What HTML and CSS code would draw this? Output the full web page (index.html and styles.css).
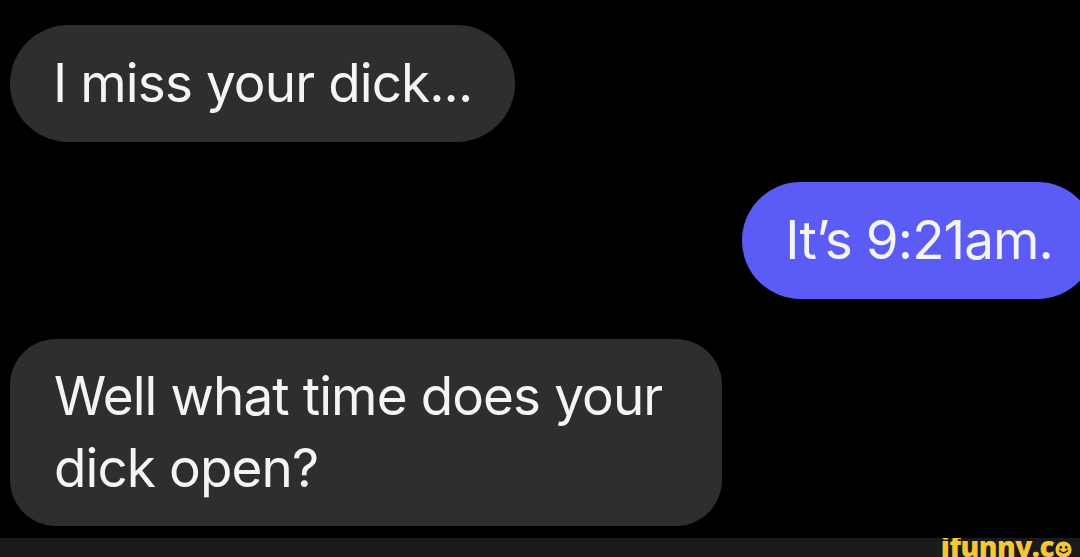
FILE: index.html
```html
<!DOCTYPE html>
<html lang="en">
<head>
    <meta charset="UTF-8">
    <title>Messages</title>
    <link rel="stylesheet" href="styles.css">
</head>
<body>
    <div class="thread">
        <div class="bubble incoming">I miss your dick...</div>
        <div class="bubble outgoing">It’s 9:21am.</div>
        <div class="bubble incoming multi">Well what time does your dick open?</div>
    </div>

    <div class="watermark-bar">
        <span class="logo">ifunny.c<svg class="smiley" viewBox="0 0 20 20" width="17" height="17">
            <circle cx="10" cy="10" r="9.5" fill="#f7c733"/>
            <circle cx="6.8" cy="7.6" r="1.6" fill="#1b1b1b"/>
            <circle cx="13.2" cy="7.6" r="1.6" fill="#1b1b1b"/>
            <path d="M5.2 11.2 Q10 16.4 14.8 11.2" fill="none" stroke="#1b1b1b" stroke-width="1.9" stroke-linecap="round"/>
        </svg></span>
    </div>
</body>
</html>
```

FILE: styles.css
```css
html, body {
    margin: 0;
    background: #000;
    height: 100%;
    overflow: hidden;
}
body {
    font-family: Inter, "Noto Sans", sans-serif;
    color: #f4f4f4;
}
.thread {
    display: flex;
    flex-direction: column;
    gap: 40px;
    padding: 25px 0 0 10px;
}
.bubble {
    font-size: 53px;
    line-height: 61px;
    padding: 28px 43px;
    border-radius: 59px;
    letter-spacing: -0.9px;
    white-space: nowrap;
}
.incoming {
    align-self: flex-start;
    background: #2e2e2f;
}
.outgoing {
    align-self: flex-end;
    margin-right: -16px;
    background: #5b5bf5;
}
.multi {
    box-sizing: border-box;
    width: 712px;
    white-space: normal;
    line-height: 72px;
    padding: 21px 44px 22px;
    border-radius: 46px;
}
.watermark-bar {
    margin-top: 12px;
    height: 20px;
    background: #1b1b1b;
    overflow: hidden;
    display: flex;
    justify-content: flex-end;
    padding-right: 8px;
}
.logo {
    font-family: "Open Sans", sans-serif;
    font-weight: 800;
    font-size: 28px;
    line-height: 28px;
    margin-top: -6px;
    color: #f7c733;
    letter-spacing: -0.5px;
    white-space: nowrap;
}
.smiley {
    vertical-align: -1px;
    margin-left: 1px;
}
```
